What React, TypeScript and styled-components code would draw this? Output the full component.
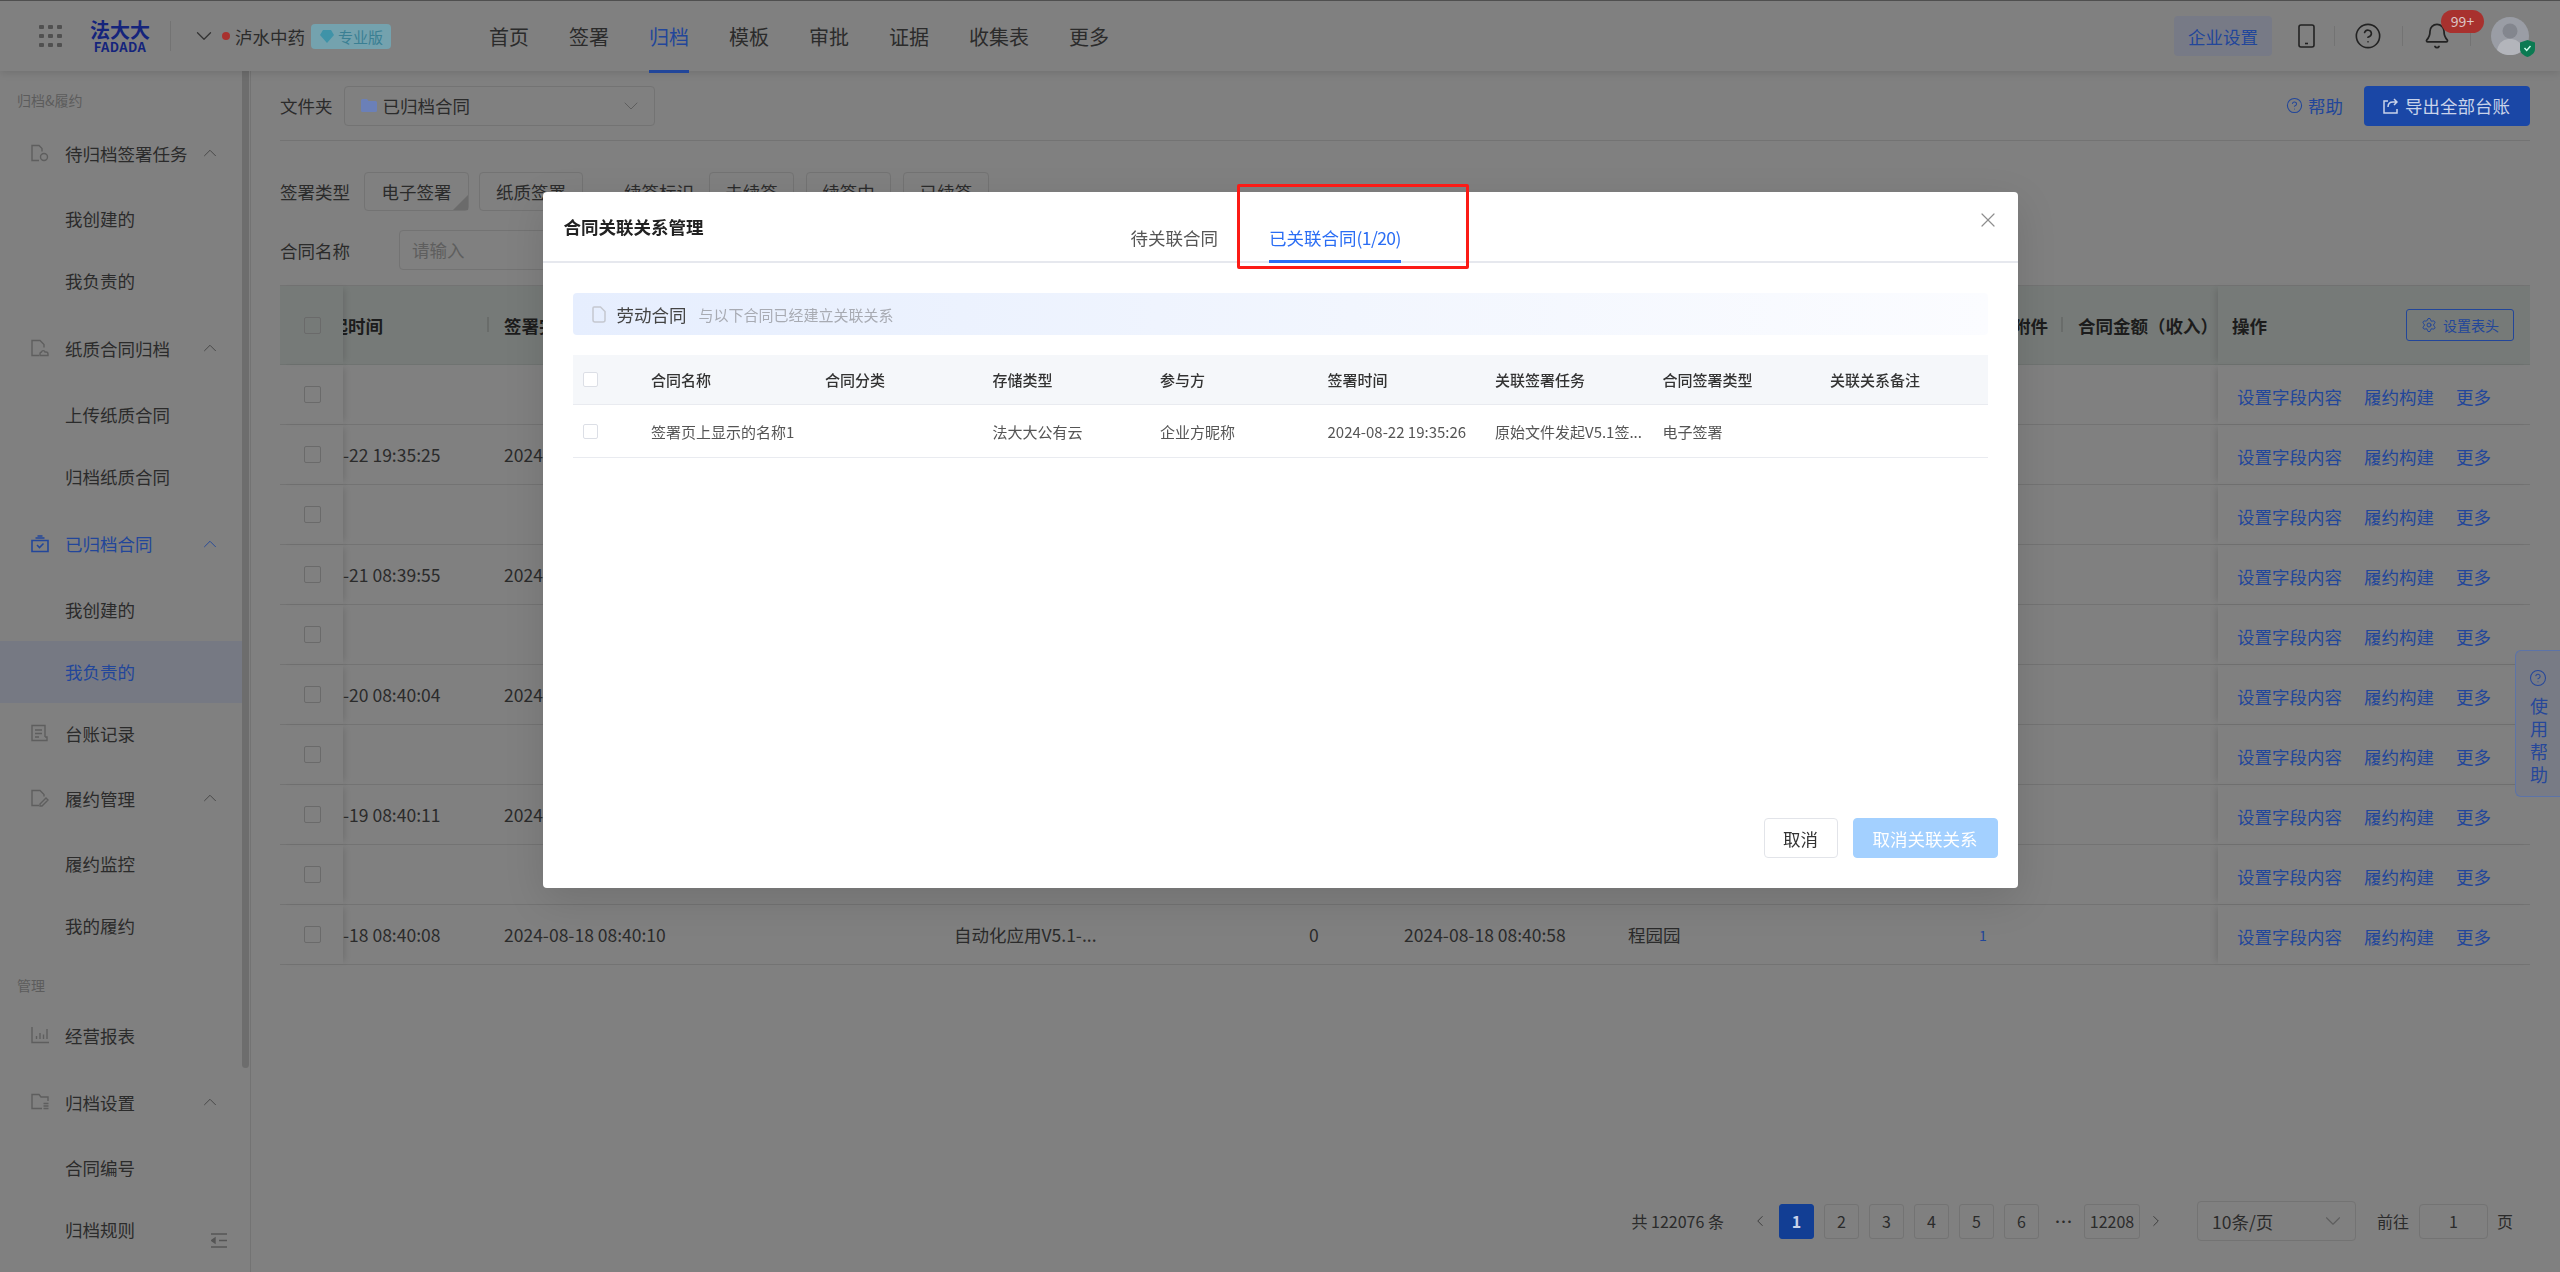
import React from "react";
import styled, {createGlobalStyle} from "styled-components";
import {Bell, ChevronDown, ChevronLeft, ChevronRight, ChevronUp, CircleHelp, Settings, X} from "lucide-react";

// the page sits under the modal mask, so its colours are the dimmed ones
const DIM_BG = "#808080";
const DIM_TEXT = "#2b2b2b";
const DIM_BLUE = "#22469a";
const DIM_LINE = "#737373";
const DIM_ICON = "#5e5e5e";
const HEAD_BG = "#767a78";

const GlobalStyle = createGlobalStyle`
  html, body {
    margin: 0;
    padding: 0;
    background: ${DIM_BG};
  }
  * {
    box-sizing: border-box;
  }
  body {
    font-family: "Noto Sans CJK SC", "Noto Sans", sans-serif;
    font-size: 17.5px;
    color: ${DIM_TEXT};
  }
`;

const Page = styled.div`
  width: 2560px;
  height: 1272px;
  overflow: hidden;
  display: flex;
  flex-direction: column;
  border-top: 1px solid #4f4f4f;
`;

/* ---------- top bar ---------- */

const TopBar = styled.header`
  height: 70px;
  flex: none;
  display: flex;
  align-items: center;
  padding: 0 30px 0 39px;
  background: ${DIM_BG};
  box-shadow: 0 2px 8px rgba(0, 0, 0, 0.12);
  position: relative;
  z-index: 2;
`;

const Logo = styled.div`
  width: 60px;
  margin-left: 28px;
  color: #14247c;
  font-weight: 700;
  text-align: center;
`;

const LogoCn = styled.div`
  font-size: 20px;
  line-height: 20px;
  height: 20px;
`;

const LogoEn = styled.div`
  font-size: 13px;
  line-height: 13px;
  height: 13px;
  letter-spacing: 0.4px;
`;

const VLine = styled.span<{$gap?: number; $h?: number}>`
  width: 1px;
  height: ${(p) => p.$h ?? 20}px;
  background: ${DIM_LINE};
  margin: 0 ${(p) => p.$gap ?? 0}px;
`;

const CompanyDot = styled.span`
  width: 8px;
  height: 8px;
  border-radius: 50%;
  background: #a8312e;
  margin: 0 5px 0 5px;
`;

const Company = styled.span`
  font-size: 17.5px;
  white-space: nowrap;
`;

const Plan = styled.span`
  height: 25px;
  width: 80px;
  margin: 0 0 0 6px;
  border-radius: 4px;
  background: #74a2ae;
  color: #3a7f93;
  font-size: 15px;
  display: flex;
  align-items: center;
  gap: 3px;
  padding-left: 8px;
`;

const Nav = styled.nav`
  display: flex;
  gap: 40px;
  margin-left: 98px;
  height: 70px;
`;

const NavItem = styled.a<{$active?: boolean}>`
  font-size: 20px;
  line-height: 72px;
  color: ${(p) => (p.$active ? DIM_BLUE : DIM_TEXT)};
  border-bottom: 3px solid ${(p) => (p.$active ? DIM_BLUE : "transparent")};
  height: 72px;
`;

const TopRight = styled.div`
  margin-left: auto;
  display: flex;
  align-items: center;
`;

const OrgButton = styled.button`
  width: 98px;
  height: 40px;
  border: 0;
  border-radius: 4px;
  background: #777a86;
  color: ${DIM_BLUE};
  font: inherit;
  font-size: 17.5px;
  padding: 0;
  margin-right: 26px;
`;

const TopIcon = styled.span`
  display: flex;
  position: relative;
  color: #222;
`;

const CountBadge = styled.span`
  position: absolute;
  left: 18px;
  top: -12px;
  width: 43px;
  height: 23px;
  border-radius: 12px;
  background: #a8312e;
  color: #dcc6c6;
  font-size: 14px;
  line-height: 23px;
  text-align: center;
`;

const Avatar = styled.span`
  position: relative;
  display: flex;
`;

const AvatarShield = styled.svg`
  position: absolute;
  right: -5px;
  bottom: -2px;
`;

/* ---------- sidebar ---------- */

const Body = styled.div`
  flex: 1;
  min-height: 0;
  display: flex;
`;

const Sidebar = styled.aside`
  width: 251px;
  flex: none;
  display: flex;
  position: relative;
  border-right: 1px solid ${DIM_LINE};
`;

const Menu = styled.div`
  width: 242px;
  flex: none;
  padding-top: 11px;
`;

const ScrollThumb = styled.div`
  width: 7px;
  height: 997px;
  background: #6d6d6d;
  border-radius: 0 0 4px 4px;
`;

const MenuLabel = styled.div<{$first?: boolean}>`
  height: 36px;
  margin-top: ${(p) => (p.$first ? 0 : 10)}px;
  padding-left: 17px;
  font-size: 14px;
  line-height: 36px;
  color: #5c5c5c;
`;

const MenuParent = styled.div<{$h: number; $active?: boolean}>`
  height: ${(p) => p.$h}px;
  display: flex;
  align-items: center;
  padding: 0 21px 0 31px;
  color: ${(p) => (p.$active ? DIM_BLUE : DIM_TEXT)};
  white-space: nowrap;

  svg:first-child {
    margin-right: 16px;
    flex: none;
  }
  svg:last-child:not(:first-child) {
    margin-left: auto;
  }
`;

const MenuChild = styled.div<{$active?: boolean}>`
  height: 62px;
  line-height: 62px;
  padding-left: 65px;
  color: ${(p) => (p.$active ? DIM_BLUE : DIM_TEXT)};
  background: ${(p) => (p.$active ? "#767983" : "transparent")};
`;

const Collapse = styled.svg`
  position: absolute;
  left: 211px;
  bottom: 24px;
`;

/* ---------- main ---------- */

const Main = styled.main`
  flex: 1;
  min-width: 0;
  padding: 15px 30px 31px 29px;
  display: flex;
  flex-direction: column;
`;

const FolderBar = styled.div`
  display: flex;
  align-items: center;
  height: 55px;
  padding-bottom: 15px;
  border-bottom: 1px solid ${DIM_LINE};
`;

const Label = styled.span<{$gap?: number}>`
  white-space: nowrap;
  margin-left: ${(p) => p.$gap ?? 0}px;
`;

const FolderSelect = styled.div`
  width: 311px;
  height: 40px;
  margin-left: 11px;
  border: 1px solid ${DIM_LINE};
  border-radius: 4px;
  display: flex;
  align-items: center;
  padding: 0 11px 0 16px;
  gap: 6px;

  svg:last-child {
    margin-left: auto;
    color: ${DIM_ICON};
  }
`;

const HelpLink = styled.a`
  margin-left: auto;
  display: flex;
  align-items: center;
  gap: 5px;
  color: ${DIM_BLUE};
`;

const ExportButton = styled.button`
  width: 166px;
  height: 40px;
  margin-left: 21px;
  border: 0;
  border-radius: 4px;
  background: #1a47a6;
  color: #c9d3ea;
  font: inherit;
  font-size: 17.5px;
  display: flex;
  align-items: center;
  gap: 7px;
  padding: 0 0 0 19px;
  white-space: nowrap;
`;

const TagRow = styled.div`
  display: flex;
  align-items: center;
  height: 39px;
  margin-top: 31px;
`;

const Tag = styled.span<{$picked?: boolean; $width: number; $gap: number}>`
  position: relative;
  width: ${(p) => p.$width}px;
  height: 39px;
  margin-left: ${(p) => p.$gap}px;
  border: 1px solid ${DIM_LINE};
  border-radius: 4px;
  line-height: 37px;
  text-align: center;
  flex: none;

  &::after {
    content: "";
    display: ${(p) => (p.$picked ? "block" : "none")};
    position: absolute;
    right: 0;
    bottom: 0;
    border-style: solid;
    border-width: 0 0 15px 15px;
    border-color: transparent transparent #6b6b6b transparent;
  }
`;

const NameRow = styled.div`
  display: flex;
  align-items: center;
  height: 40px;
  margin-top: 19px;
`;

const NameInput = styled.div`
  width: 400px;
  height: 40px;
  margin-left: 49px;
  border: 1px solid ${DIM_LINE};
  border-radius: 4px;
  padding-left: 12px;
  line-height: 38px;
  color: #5e5e5e;
`;

/* ---------- list table ---------- */

const COLUMNS = "63px 161px 450px 355px 95px 224px 340px 110px 140px 312px";

const Table = styled.div`
  margin-top: 15px;
  border-top: 1px solid ${DIM_LINE};
`;

const HeadRow = styled.div`
  display: grid;
  grid-template-columns: ${COLUMNS};
  height: 79px;
  background: ${HEAD_BG};
  border-bottom: 1px solid #6f7371;
  font-weight: 700;
  color: #1c1c1c;
`;

const Row = styled.div`
  display: grid;
  grid-template-columns: ${COLUMNS};
  height: 60px;
  border-bottom: 1px solid ${DIM_LINE};
`;

const Cell = styled.div<{$pad?: number; $mark?: boolean}>`
  position: relative;
  display: flex;
  align-items: center;
  padding-left: ${(p) => p.$pad ?? 0}px;
  white-space: nowrap;
  overflow: hidden;

  &::after {
    content: "";
    display: ${(p) => (p.$mark ? "block" : "none")};
    position: absolute;
    right: 15px;
    top: 31px;
    width: 2px;
    height: 15px;
    background: #696c6a;
  }
`;

const ScrolledTitle = styled.span`
  margin-left: -30px;
`;

const CheckCell = styled.div`
  display: flex;
  align-items: center;
  padding-left: 24px;
  box-shadow: 5px 0 6px -3px rgba(0, 0, 0, 0.12);
  position: relative;
`;

const OpsCell = styled.div`
  display: flex;
  align-items: center;
  gap: 22px;
  padding-left: 19px;
  padding-top: 3px;
  color: ${DIM_BLUE};
  box-shadow: -5px 0 6px -3px rgba(0, 0, 0, 0.12);
  position: relative;
  white-space: nowrap;
`;

const OpsHead = styled(OpsCell)`
  padding: 0 16px 0 14px;
  color: #1c1c1c;
`;

const HeadButton = styled.button`
  margin-left: auto;
  width: 108px;
  height: 32px;
  border: 1px solid ${DIM_BLUE};
  border-radius: 3px;
  background: transparent;
  color: ${DIM_BLUE};
  font: inherit;
  font-size: 14px;
  font-weight: 400;
  display: flex;
  align-items: center;
  justify-content: center;
  gap: 6px;
  padding: 0;
`;

const Check = styled.span<{$size?: number; $line?: string}>`
  display: block;
  flex: none;
  width: ${(p) => p.$size ?? 17}px;
  height: ${(p) => p.$size ?? 17}px;
  border: 1px solid ${(p) => p.$line ?? "#6a6a6a"};
  border-radius: 2px;
  background: ${(p) => (p.$line ? "#fff" : "transparent")};
`;

const Link = styled.span`
  color: ${DIM_BLUE};
  font-size: 14px;
`;

/* ---------- pagination ---------- */

const Pager = styled.div`
  margin-top: auto;
  padding-right: 17px;
  display: flex;
  justify-content: flex-end;
  align-items: center;
  height: 40px;
  font-size: 16px;
`;

const Total = styled.span`
  margin-right: 27px;
  white-space: nowrap;
`;

const PagerArrow = styled.span<{$gap?: number}>`
  display: flex;
  color: #3c3c3c;
  margin: 0 ${(p) => p.$gap ?? 0}px;
`;

const PageBtn = styled.span<{$on?: boolean; $wide?: boolean}>`
  width: ${(p) => (p.$wide ? 56 : 35)}px;
  height: 35px;
  margin-left: ${(p) => (p.$wide ? 0 : 10)}px;
  border: 1px solid ${(p) => (p.$on ? "#123e94" : DIM_LINE)};
  border-radius: 3px;
  background: ${(p) => (p.$on ? "#123e94" : "transparent")};
  color: ${(p) => (p.$on ? "#c9d3ea" : DIM_TEXT)};
  font-weight: ${(p) => (p.$on ? 700 : 400)};
  line-height: 33px;
  text-align: center;
`;

const Ellipsis = styled.span`
  width: 45px;
  text-align: center;
  font-weight: 700;
  font-size: 10px;
  letter-spacing: -4px;
`;

const SizeSelect = styled.div`
  width: 159px;
  height: 40px;
  margin: 0 21px 0 25px;
  border: 1px solid ${DIM_LINE};
  border-radius: 4px;
  padding: 0 9px 0 14px;
  display: flex;
  align-items: center;
  justify-content: space-between;
  font-size: 17.5px;

  svg {
    color: ${DIM_ICON};
  }
`;

const JumpBox = styled.span`
  width: 69px;
  height: 35px;
  margin: 0 9px 0 10px;
  border: 1px solid ${DIM_LINE};
  border-radius: 4px;
  line-height: 33px;
  text-align: center;
`;

/* ---------- help tab ---------- */

const HelpTab = styled.div`
  position: fixed;
  right: 0;
  top: 650px;
  width: 45px;
  height: 147px;
  border: 1px solid #5c73a8;
  border-right: 0;
  border-radius: 6px 0 0 6px;
  background: #787b85;
  color: #26479a;
  display: flex;
  flex-direction: column;
  align-items: center;
  padding: 18px 0 0 2px;
  font-size: 18px;
  line-height: 23px;

  svg {
    margin: 0 2px 7px 0;
  }
`;

/* ---------- modal ---------- */

const ModalLayer = styled.div`
  position: fixed;
  inset: 0;
  z-index: 5;
  display: flex;
  justify-content: center;
  align-items: flex-start;
  padding-top: 192px;
`;

const Modal = styled.section`
  position: relative;
  width: 1475px;
  height: 696px;
  border-radius: 4px;
  background: #fff;
  color: #333;
  box-shadow: 0 12px 40px rgba(0, 0, 0, 0.12);
  display: flex;
  flex-direction: column;
`;

const ModalHead = styled.div`
  height: 71px;
  flex: none;
  position: relative;
  display: flex;
  border-bottom: 2px solid #e6e8ee;
  padding-left: 21px;
`;

const ModalTitle = styled.h2`
  margin: 0;
  padding-top: 20px;
  font-size: 17.5px;
  font-weight: 700;
  line-height: 30px;
  color: #222;
  width: 567px;
  flex: none;
`;

const ModalTabs = styled.div`
  display: flex;
  gap: 51px;
`;

const ModalTab = styled.div<{$active?: boolean}>`
  height: 71px;
  padding-top: 31px;
  line-height: 30px;
  white-space: nowrap;
  color: ${(p) => (p.$active ? "#2a6df4" : "#555")};
  border-bottom: 3px solid ${(p) => (p.$active ? "#2a6df4" : "transparent")};
`;

const TabCount = styled.span`
  letter-spacing: -0.6px;
`;

const CloseButton = styled.span`
  position: absolute;
  right: 18px;
  top: 16px;
  display: flex;
  color: #8e8e8e;
`;

const RedMark = styled.div`
  position: absolute;
  left: 694px;
  top: -8px;
  width: 232px;
  height: 85px;
  border: 3px solid #fb1b16;
  border-radius: 2px;
  pointer-events: none;
`;

const ModalBody = styled.div`
  flex: 1;
  padding: 30px 30px 0;
`;

const Banner = styled.div`
  height: 42px;
  border-radius: 4px;
  background: linear-gradient(90deg, #e6eefe 0%, #f2f6fe 55%, #fbfcff 100%);
  display: flex;
  align-items: center;
  padding-left: 19px;
`;

const BannerTitle = styled.span`
  margin-left: 11px;
  color: #444;
`;

const BannerHint = styled.span`
  margin-left: 12px;
  font-size: 15px;
  color: #a8abb3;
`;

const PICK_COLUMNS = "78.5px 174px repeat(6, 167.5px) 1fr";

const PickHead = styled.div`
  margin-top: 20px;
  height: 50px;
  display: grid;
  grid-template-columns: ${PICK_COLUMNS};
  align-items: center;
  background: #f5f7fa;
  border-bottom: 1px solid #e9ebf0;
  font-size: 15px;
  font-weight: 500;
  color: #333;
`;

const PickRow = styled.div`
  height: 53px;
  display: grid;
  grid-template-columns: ${PICK_COLUMNS};
  align-items: center;
  border-bottom: 1px solid #e9ebf0;
  font-size: 15px;
  color: #555;
  white-space: nowrap;
`;

const PickCheck = styled.div`
  padding-left: 10px;
`;

const ModalFoot = styled.div`
  flex: none;
  height: 70px;
  padding-right: 20px;
  display: flex;
  justify-content: flex-end;
  gap: 15px;
`;

const FootButton = styled.button<{$primary?: boolean}>`
  width: ${(p) => (p.$primary ? 145 : 74)}px;
  height: 40px;
  border-radius: 4px;
  border: 1px solid ${(p) => (p.$primary ? "#a3d0ff" : "#e2e4e9")};
  background: ${(p) => (p.$primary ? "#a3d0ff" : "#fff")};
  color: ${(p) => (p.$primary ? "#fff" : "#333")};
  font: inherit;
  font-size: 17.5px;
  padding: 0;
`;

/* ---------- drawn icons ---------- */

const AppsIcon = () => (
  <svg width="23" height="22" viewBox="0 0 23 22" fill="#505050">
    {[0, 9, 18].map((y) =>
      [0, 9, 18].map((x) => <rect key={`${x}-${y}`} x={x} y={y} width="5" height="4" rx="1" />)
    )}
  </svg>
);

const Doc = ({children}: {children?: React.ReactNode}) => (
  <svg width="18" height="18" viewBox="0 0 18 18" fill="none" stroke={DIM_ICON} strokeWidth="1.4">
    {children}
  </svg>
);

const MENU_ICONS: Record<string, React.ReactNode> = {
  pending: (
    <Doc>
      <path d="M8 16.5H1V1.5h7l3 3v3" />
      <circle cx="13" cy="13" r="3.5" />
    </Doc>
  ),
  paper: (
    <Doc>
      <path d="M8 16.5H1V1.5h8l4 4v3" />
      <path d="M9 16.5h8v-1.5a2 2 0 0 0-2-2h-1a1.8 1.8 0 0 0-3.5 0H11a2 2 0 0 0-2 2z" />
    </Doc>
  ),
  ledger: (
    <Doc>
      <path d="M14 13V1.5H1v15h15v-3.5h-2" />
      <path d="M4 6h7M4 9.5h7M4 13h4" />
    </Doc>
  ),
  perform: (
    <Doc>
      <path d="M8 16.5H1V1.5h8l4 4v2" />
      <path d="M9 15l6-6 2 2-6 6H9z" />
    </Doc>
  ),
  report: (
    <Doc>
      <path d="M1 1v15.5h17" />
      <path d="M5.5 13v-3M9 13V7M12.5 13V8.5M16 13V3" />
    </Doc>
  ),
  setting: (
    <Doc>
      <path d="M11 15.5H1V1.5h7l2 2.5h7v4" />
      <path d="M12.5 10.5h5M12.5 13h5M12.5 15.5h5" />
    </Doc>
  ),
};

const ArchivedIcon = () => (
  <svg width="18" height="18" viewBox="0 0 18 18" fill="none" stroke={DIM_BLUE} strokeWidth="1.6">
    <path d="M1 5.5h16v11H1z" />
    <path d="M4.5 3h9M6.5 1h5" />
    <path d="M6 10l2.5 2.5L12.5 8.500" />
  </svg>
);

const FolderIcon = () => (
  <svg width="16" height="13" viewBox="0 0 16 13" fill="#6b80b8">
    <path d="M0 1.500A1.500 1.500 0 0 1 1.500 0H6l1.500 2h7A1.500 1.500 0 0 1 16 3.500v8a1.500 1.500 0 0 1-1.500 1.500h-13A1.500 1.500 0 0 1 0 11.500z" />
  </svg>
);

const ExportIcon = () => (
  <svg width="15" height="17" viewBox="0 0 15 17" fill="none" stroke="#c9d3ea" strokeWidth="1.5">
    <path d="M5 4H1v12h13v-4" />
    <path d="M5 10c0-3 2-5 5-5h4M11 2l3 3-3 3" />
  </svg>
);

const PhoneIcon = () => (
  <svg width="17" height="24" viewBox="0 0 17 24" fill="none" stroke="#222" strokeWidth="1.6">
    <rect x="1" y="1" width="15" height="22" rx="2" />
    <path d="M7 19.500h3" />
  </svg>
);

const AvatarIcon = () => (
  <svg width="40" height="38" viewBox="0 0 40 38">
    <circle cx="20" cy="19" r="19" fill="#9a9da5" />
    <circle cx="20" cy="14" r="7.500" fill="#83868e" />
    <path d="M7 33c2-9 8-11 13-11s11 2 13 11a19 19 0 0 1-26 0z" fill="#b3b5bb" />
  </svg>
);

const OrderDoc = () => (
  <svg width="14" height="17" viewBox="0 0 14 17" fill="none" stroke="#c5c8d0" strokeWidth="1.5">
    <path d="M2 1h6.500L13 5.500V14a2 2 0 0 1-2 2H3a2 2 0 0 1-2-2V2a1 1 0 0 1 1-1z" />
  </svg>
);

/* ---------- data ---------- */

const MENU = [
  {label: "归档&履约"},
  {title: "待归档签署任务", icon: "pending", h: 70, kids: ["我创建的", "我负责的"]},
  {title: "纸质合同归档", icon: "paper", h: 72, kids: ["上传纸质合同", "归档纸质合同"]},
  {title: "已归档合同", icon: "archived", h: 71, kids: ["我创建的", "我负责的"]},
  {title: "台账记录", icon: "ledger", h: 60, kids: []},
  {title: "履约管理", icon: "perform", h: 70, kids: ["履约监控", "我的履约"]},
  {label: "管理"},
  {title: "经营报表", icon: "report", h: 64, kids: []},
  {title: "归档设置", icon: "setting", h: 70, kids: ["合同编号", "归档规则"]},
];

const NAV = ["首页", "签署", "归档", "模板", "审批", "证据", "收集表", "更多"];

const ROWS = [
  {},
  {sign: "-22 19:35:25", date: "2024-08-22 19:35:26"},
  {},
  {sign: "-21 08:39:55", date: "2024-08-21 08:39:57"},
  {},
  {sign: "-20 08:40:04", date: "2024-08-20 08:40:06"},
  {},
  {sign: "-19 08:40:11", date: "2024-08-19 08:40:13"},
  {},
  {
    sign: "-18 08:40:08",
    date: "2024-08-18 08:40:10",
    task: "自动化应用V5.1-...",
    count: "0",
    finish: "2024-08-18 08:40:58",
    owner: "程园园",
    attach: "1",
  },
] as Array<Record<string, string>>;

const PICK_HEAD = ["合同名称", "合同分类", "存储类型", "参与方", "签署时间", "关联签署任务", "合同签署类型", "关联关系备注"];
const PICK_ROW = ["签署页上显示的名称1", "", "法大大公有云", "企业方昵称", "2024-08-22 19:35:26", "原始文件发起V5.1签...", "电子签署", ""];

export default function App() {
  return (
    <>
      <GlobalStyle />
      <Page>
        <TopBar>
          <AppsIcon />
          <Logo>
            <LogoCn>法大大</LogoCn>
            <LogoEn>FADADA</LogoEn>
          </Logo>
          <VLine $gap={20} $h={30} />
          <ChevronDown size={26} color="#333" strokeWidth={1.2} />
          <CompanyDot />
          <Company>泸水中药</Company>
          <Plan>
            <svg width="16" height="16" viewBox="0 0 16 16" fill="#3f93a8">
              <path d="M8 15L1 7l3-5h8l3 5z" />
            </svg>
            专业版
          </Plan>
          <Nav>
            {NAV.map((n) => (
              <NavItem key={n} $active={n === "归档"}>
                {n}
              </NavItem>
            ))}
          </Nav>
          <TopRight>
            <OrgButton>企业设置</OrgButton>
            <TopIcon>
              <PhoneIcon />
            </TopIcon>
            <VLine $gap={19} />
            <TopIcon>
              <CircleHelp size={28} strokeWidth={1.4} />
            </TopIcon>
            <VLine $gap={20} />
            <TopIcon>
              <Bell size={28} strokeWidth={1.5} />
              <CountBadge>99+</CountBadge>
            </TopIcon>
            <VLine $gap={19} />
            <Avatar>
              <AvatarIcon />
              <AvatarShield width="15" height="17" viewBox="0 0 15 17">
                <path d="M7.500 0L15 2.500V9c0 4-3.500 6.500-7.500 8C3.500 15.500 0 13 0 9V2.500z" fill="#0b7a52" />
                <path d="M4.500 8l2.200 2.500L10.500 6" fill="none" stroke="#cfe" strokeWidth="1.400" />
              </AvatarShield>
            </Avatar>
          </TopRight>
        </TopBar>

        <Body>
          <Sidebar>
            <Menu>
              {MENU.map((m, i) =>
                "label" in m ? (
                  <MenuLabel key={m.label} $first={i === 0}>
                    {m.label}
                  </MenuLabel>
                ) : (
                  <React.Fragment key={m.title}>
                    <MenuParent $h={m.h!} $active={m.icon === "archived"}>
                      {m.icon === "archived" ? <ArchivedIcon /> : MENU_ICONS[m.icon!]}
                      {m.title}
                      {m.kids!.length > 0 && (
                        <ChevronUp size={22} color={m.icon === "archived" ? DIM_BLUE : "#444"} strokeWidth={1} />
                      )}
                    </MenuParent>
                    {m.kids!.map((k) => (
                      <MenuChild key={k} $active={m.icon === "archived" && k === "我负责的"}>
                        {k}
                      </MenuChild>
                    ))}
                  </React.Fragment>
                )
              )}
            </Menu>
            <ScrollThumb />
            <Collapse width="16" height="15" viewBox="0 0 16 15" fill="none" stroke="#555" strokeWidth="1.400">
              <path d="M0 1h16M8 7.500h8M0 14h16" />
              <path d="M4 5v5L0.500 7.500z" fill="#555" />
            </Collapse>
          </Sidebar>

          <Main>
            <FolderBar>
              <Label>文件夹</Label>
              <FolderSelect>
                <FolderIcon />
                已归档合同
                <ChevronDown size={24} strokeWidth={1} />
              </FolderSelect>
              <HelpLink>
                <CircleHelp size={17} strokeWidth={1.5} />
                帮助
              </HelpLink>
              <ExportButton>
                <ExportIcon />
                导出全部台账
              </ExportButton>
            </FolderBar>

            <TagRow>
              <Label>签署类型</Label>
              <Tag $picked $width={105} $gap={14}>
                电子签署
              </Tag>
              <Tag $width={104} $gap={10}>
                纸质签署
              </Tag>
              <Label $gap={41}>续签标识</Label>
              <Tag $width={85} $gap={15}>
                未续签
              </Tag>
              <Tag $width={85} $gap={12}>
                续签中
              </Tag>
              <Tag $width={86} $gap={12}>
                已续签
              </Tag>
            </TagRow>

            <NameRow>
              <Label>合同名称</Label>
              <NameInput>请输入</NameInput>
            </NameRow>

            <Table>
              <HeadRow>
                <CheckCell>
                  <Check />
                </CheckCell>
                <Cell $mark>
                  <ScrolledTitle>发起时间</ScrolledTitle>
                </Cell>
                <Cell>签署完成时间</Cell>
                <Cell />
                <Cell />
                <Cell />
                <Cell />
                <Cell $pad={45} $mark>
                  附件
                </Cell>
                <Cell>合同金额（收入）</Cell>
                <OpsHead>
                  操作
                  <HeadButton>
                    <Settings size={16} strokeWidth={1.5} />
                    设置表头
                  </HeadButton>
                </OpsHead>
              </HeadRow>
              {ROWS.map((r, i) => (
                <Row key={i}>
                  <CheckCell>
                    <Check />
                  </CheckCell>
                  <Cell>{r.sign}</Cell>
                  <Cell>{r.date}</Cell>
                  <Cell>{r.task}</Cell>
                  <Cell>{r.count}</Cell>
                  <Cell>{r.finish}</Cell>
                  <Cell>{r.owner}</Cell>
                  <Cell $pad={11}>{r.attach && <Link>{r.attach}</Link>}</Cell>
                  <Cell />
                  <OpsCell>
                    <span>设置字段内容</span>
                    <span>履约构建</span>
                    <span>更多</span>
                  </OpsCell>
                </Row>
              ))}
            </Table>

            <Pager>
              <Total>共 122076 条</Total>
              <PagerArrow>
                <ChevronLeft size={18} strokeWidth={1.3} />
              </PagerArrow>
              {[1, 2, 3, 4, 5, 6].map((n) => (
                <PageBtn key={n} $on={n === 1}>
                  {n}
                </PageBtn>
              ))}
              <Ellipsis>•••</Ellipsis>
              <PageBtn $wide>12208</PageBtn>
              <PagerArrow $gap={7}>
                <ChevronRight size={18} strokeWidth={1.3} />
              </PagerArrow>
              <SizeSelect>
                10条/页
                <ChevronDown size={26} strokeWidth={1} />
              </SizeSelect>
              前往
              <JumpBox>1</JumpBox>页
            </Pager>
          </Main>
        </Body>

        <HelpTab>
          <CircleHelp size={18} strokeWidth={1.4} />
          <span>使</span>
          <span>用</span>
          <span>帮</span>
          <span>助</span>
        </HelpTab>

        <ModalLayer>
          <Modal>
            <ModalHead>
              <ModalTitle>合同关联关系管理</ModalTitle>
              <ModalTabs>
                <ModalTab>待关联合同</ModalTab>
                <ModalTab $active>
                  已关联合同<TabCount>(1/20)</TabCount>
                </ModalTab>
              </ModalTabs>
              <CloseButton>
                <X size={24} strokeWidth={1.2} />
              </CloseButton>
            </ModalHead>
            <ModalBody>
              <Banner>
                <OrderDoc />
                <BannerTitle>劳动合同</BannerTitle>
                <BannerHint>与以下合同已经建立关联关系</BannerHint>
              </Banner>
              <PickHead>
                <PickCheck>
                  <Check $size={15} $line="#dcdfe6" />
                </PickCheck>
                {PICK_HEAD.map((h) => (
                  <span key={h}>{h}</span>
                ))}
              </PickHead>
              <PickRow>
                <PickCheck>
                  <Check $size={15} $line="#dcdfe6" />
                </PickCheck>
                {PICK_ROW.map((c, i) => (
                  <span key={i}>{c}</span>
                ))}
              </PickRow>
            </ModalBody>
            <ModalFoot>
              <FootButton>取消</FootButton>
              <FootButton $primary>取消关联关系</FootButton>
            </ModalFoot>
            <RedMark />
          </Modal>
        </ModalLayer>
      </Page>
    </>
  );
}
